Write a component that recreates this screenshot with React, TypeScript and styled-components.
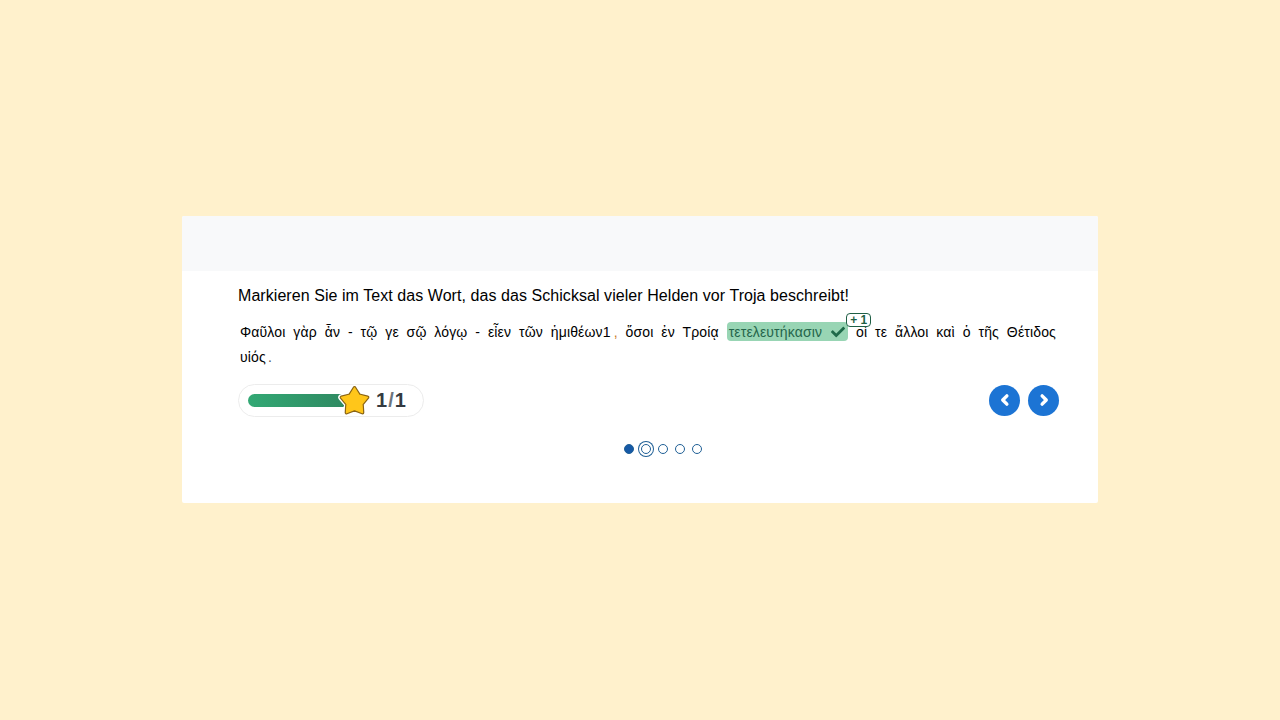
import React from 'react';
import styled, { createGlobalStyle } from 'styled-components';

const GlobalStyle = createGlobalStyle`
  html, body {
    margin: 0;
    padding: 0;
    background: #fff1cc;
    font-family: 'Liberation Sans', Arial, sans-serif;
  }
`;

const words = ['Φαῦλοι', 'γὰρ', 'ἆν', '-', 'τῷ', 'γε', 'σῷ', 'λόγῳ', '-', 'εἶεν', 'τῶν'];
const starPath = 'M16 4.5L20.2 11.2 27.9 13.1 22.8 19.2 23.3 27.1 16 24.2 8.7 27.1 9.2 19.2 4.1 13.1 11.8 11.2z';

export default function App() {
  return (
    <>
      <GlobalStyle />
      <Page>
        <Card>
          <CardHeader />
          <CardBody>
            <Question>Markieren Sie im Text das Wort, das das Schicksal vieler Helden vor Troja beschreibt!</Question>
            <Passage>
              {words.join(' ')} ἡμιθέων1<Comma>,</Comma> ὅσοι ἐν Τροίᾳ{' '}
              <Marked>
                τετελευτήκασιν
                <CheckIcon viewBox="0 0 512 512">
                  <path d="M173.9 439.4 7.5 273c-10-10-10-26.2 0-36.2l36.2-36.2c10-10 26.2-10 36.2 0L192 312.7 432.1 72.6c10-10 26.2-10 36.2 0l36.2 36.2c10 10 10 26.2 0 36.2L210.1 439.4c-10 10-26.2 10-36.2 0z" />
                </CheckIcon>
                <ScoreBadge>+ 1</ScoreBadge>
              </Marked>{' '}
              οἱ τε ἄλλοι καὶ ὁ τῆς Θέτιδος υἱός<Stop>.</Stop>
            </Passage>
            <Controls>
              <ProgressPill>
                <Track>
                  <Fill style={{ width: '100%' }} />
                </Track>
                <StarIcon viewBox="0 0 32 32">
                  <StarHalo d={starPath} />
                  <StarEdge d={starPath} />
                  <StarShape d={starPath} />
                </StarIcon>
                <Score>
                  1<Slash>/</Slash>1
                </Score>
              </ProgressPill>
              <NavButtons>
                <NavButton aria-label="Zurück">
                  <svg viewBox="0 0 24 24" width="18" height="18">
                    <path d="M14.5 6.5L9 12l5.5 5.5" />
                  </svg>
                </NavButton>
                <NavButton aria-label="Weiter">
                  <svg viewBox="0 0 24 24" width="18" height="18">
                    <path d="M9.5 6.5L15 12l-5.5 5.5" />
                  </svg>
                </NavButton>
              </NavButtons>
            </Controls>
            <Steps>
              <Step $state="done" />
              <Step $state="current" />
              <Step $state="open" />
              <Step $state="open" />
              <Step $state="open" />
            </Steps>
          </CardBody>
        </Card>
      </Page>
    </>
  );
}

const Page = styled.div`
  display: flex;
  justify-content: center;
  padding-top: 216px;
`;

const Card = styled.div`
  width: 916px;
  height: 287px;
  background: #fff;
  border-radius: 2px;
  overflow: hidden;
`;

const CardHeader = styled.div`
  height: 55px;
  background: #f8f9fa;
`;

const CardBody = styled.div`
  padding: 16px 39px 0 56px;
`;

const Question = styled.div`
  font-size: 16px;
  line-height: 18px;
  letter-spacing: 0.06px;
  color: #000;
`;

const Passage = styled.div`
  margin: 15px 3px 0 2px;
  font-size: 14px;
  line-height: 25px;
  letter-spacing: 0.15px;
  color: #000;
  text-align: justify;
  word-spacing: 3px;
`;

const Comma = styled.span`
  margin-left: 3px;
  color: #c9782a;
`;

const Stop = styled.span`
  margin-left: 2px;
  color: #555;
`;

const Marked = styled.span`
  position: relative;
  display: inline-block;
  height: 19px;
  line-height: 21px;
  padding: 0 3px 0 2px;
  border-radius: 4px;
  background: #98d5b4;
  color: #25654b;
  word-spacing: 0;
`;

const CheckIcon = styled.svg`
  width: 14px;
  height: 14px;
  margin-left: 9px;
  vertical-align: -2px;
  fill: #1f6b4a;
`;

const ScoreBadge = styled.span`
  position: absolute;
  top: -9px;
  right: -23px;
  width: 25px;
  height: 14px;
  box-sizing: border-box;
  border: 1px solid #1f5f45;
  border-radius: 4px;
  background: #fff;
  color: #1f5f45;
  font-size: 12px;
  font-weight: 700;
  line-height: 12px;
  text-align: center;
  word-spacing: 0;
  letter-spacing: 0;
`;

const Controls = styled.div`
  display: flex;
  align-items: center;
  justify-content: space-between;
  margin-top: 14px;
`;

const ProgressPill = styled.div`
  position: relative;
  display: flex;
  align-items: center;
  width: 186px;
  height: 33px;
  box-sizing: border-box;
  padding: 0 9px;
  border: 1px solid #ececec;
  border-radius: 17px;
`;

const Track = styled.div`
  width: 96px;
  height: 13px;
  border-radius: 7px 0 0 7px;
  overflow: hidden;
`;

const Fill = styled.div`
  height: 100%;
  background: linear-gradient(90deg, #32a874, #2f8a62);
`;

const StarIcon = styled.svg`
  width: 35px;
  height: 35px;
  margin-left: -7px;
  flex: none;
`;

const StarHalo = styled.path`
  fill: #fff;
  stroke: #fff;
  stroke-width: 6;
  stroke-linejoin: round;
`;

const StarEdge = styled.path`
  fill: #8a6414;
  stroke: #8a6414;
  stroke-width: 3.4;
  stroke-linejoin: round;
`;

const StarShape = styled.path`
  fill: #ffc61a;
  stroke: #ffc61a;
  stroke-width: 1.2;
  stroke-linejoin: round;
`;

const Score = styled.div`
  margin-left: 4px;
  color: #343a40;
  font-size: 20px;
  font-weight: 700;
  white-space: nowrap;
`;

const Slash = styled.span`
  margin: 0 1px;
  color: #6c757d;
`;

const NavButtons = styled.div`
  display: flex;
  gap: 8px;
  margin-top: -1px;
`;

const NavButton = styled.button`
  width: 31px;
  height: 31px;
  padding: 0;
  border: 0;
  border-radius: 50%;
  background: #1c74d4;
  display: flex;
  align-items: center;
  justify-content: center;

  path {
    fill: none;
    stroke: #fff;
    stroke-width: 4.5;
    stroke-linecap: round;
    stroke-linejoin: round;
  }
`;

const Steps = styled.div`
  display: flex;
  align-items: center;
  justify-content: center;
  gap: 7px;
  margin-top: 27px;
  padding-left: 29px;
`;

const Step = styled.span<{ $state: 'done' | 'current' | 'open' }>`
  box-sizing: border-box;
  width: 10px;
  height: 10px;
  border-radius: 50%;
  border: 1px solid #1f5f96;
  background: ${(p) => (p.$state === 'done' ? '#1659a6' : '#fff')};
  ${(p) =>
    p.$state === 'current' &&
    `
    box-shadow: 0 0 0 2px #fff, 0 0 0 3px #1f5f96;
  `}
`;
